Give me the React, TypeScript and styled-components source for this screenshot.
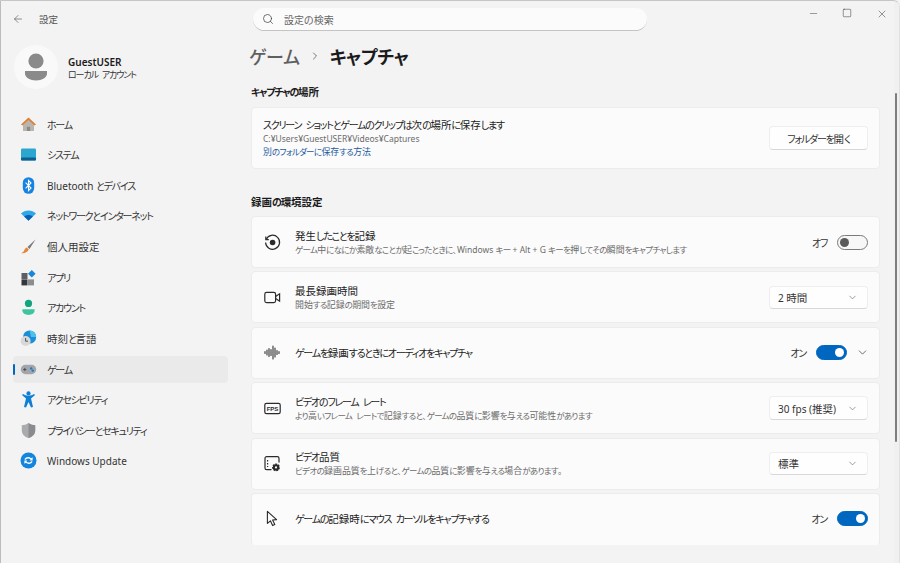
import { FC, ReactNode } from 'react'
import { createGlobalStyle, styled } from 'styled-components'
import { ArrowLeft, ChevronDown, ChevronRight, Minus, Search, Square, X } from 'lucide-react'

const GlobalStyle = createGlobalStyle`
  html, body {
    margin: 0;
    padding: 0;
    background: #f3f3f3;
  }
  body {
    font-family: "Noto Sans", "Noto Sans CJK JP", sans-serif;
    font-feature-settings: "palt";
    color: #1b1b1b;
    overflow: hidden;
  }
`

const Window = styled.div`
  box-sizing: border-box;
  position: relative;
  display: grid;
  grid-template-columns: 239px 1fr;
  width: 900px;
  height: 563px;
  overflow: hidden;
  background: #f3f3f3;
  border-top: 1px solid #c6c6c6;
  border-left: 1px solid #bcbcbc;
  border-right: 1px solid #e2e2e2;
  border-top-right-radius: 7px;
`

const Sidebar = styled.aside`
  display: flex;
  flex-direction: column;
`

const TitleBar = styled.div`
  display: flex;
  align-items: center;
  gap: 15px;
  height: 36px;
  padding-left: 11px;
  color: #555;
  font-size: 9.5px;
`

const Profile = styled.div`
  display: flex;
  align-items: center;
  gap: 10px;
  height: 44px;
  margin: 8px 0 21.5px 13px;
`

const Avatar = styled.div`
  display: flex;
  align-items: center;
  justify-content: center;
  width: 44px;
  height: 44px;
  border-radius: 50%;
  background: #f9f9f9;
`

const ProfileText = styled.div`
  display: flex;
  flex-direction: column;
  padding-top: 3px;
`

const UserName = styled.div`
  font-size: 10px;
  line-height: 13px;
  font-weight: 600;
`

const UserKind = styled.div`
  font-size: 9px;
  line-height: 12px;
  color: #333;
`

const Nav = styled.nav`
  display: flex;
  flex-direction: column;
  gap: 3.64px;
  margin-left: 12px;
  width: 215px;
`

const NavItem = styled.div<{ $active?: boolean }>`
  position: relative;
  display: flex;
  align-items: center;
  gap: 10px;
  height: 27px;
  padding-left: 7px;
  border-radius: 4px;
  font-size: 10px;
  color: #333;
  background: ${p => (p.$active ? '#eaeaea' : 'transparent')};

  &::before {
    content: '';
    display: ${p => (p.$active ? 'block' : 'none')};
    position: absolute;
    left: 0;
    top: 8px;
    width: 2px;
    height: 11px;
    border-radius: 1px;
    background: #0067c0;
  }
`

const NavIcon = styled.svg`
  flex: none;
  width: 17px;
  height: 17px;
`

const Main = styled.main`
  display: flex;
  flex-direction: column;
  height: 544px;
  overflow: hidden;
  padding: 0 19px 0 11px;
`

const TopBar = styled.div`
  display: flex;
  align-items: flex-start;
  justify-content: space-between;
  height: 36px;
  flex: none;
`

const SearchBox = styled.div`
  box-sizing: border-box;
  display: flex;
  align-items: center;
  gap: 10px;
  width: 394px;
  height: 23px;
  margin: 7px 0 0 2px;
  padding-left: 9px;
  border-radius: 12px;
  background: #fbfbfb;
  border-bottom: 1.5px solid #c4c4c4;
  font-size: 10px;
  color: #666;
`

const WindowControls = styled.div`
  display: flex;
  gap: 23.5px;
  margin: 7px -7.5px 0 0;
  color: #333;
`

const Title = styled.h1`
  display: flex;
  align-items: center;
  gap: 9px;
  height: 38px;
  margin: 0 0 0 -2px;
  flex: none;
  font-size: 18px;
  font-weight: 600;
  letter-spacing: -0.3px;
  color: #1b1b1b;
`

const TitleParent = styled.span`
  color: #5f5f5f;
  font-weight: 500;
`

const SectionHeading = styled.h2<{ $top: number; $bottom: number }>`
  flex: none;
  height: 16px;
  margin: ${p => p.$top}px 0 ${p => p.$bottom}px;
  font-size: 10px;
  line-height: 16px;
  font-weight: 600;
`

const Card = styled.section`
  box-sizing: border-box;
  flex: none;
  display: flex;
  align-items: center;
  justify-content: space-between;
  height: 62px;
  padding: 0 11px;
  background: #fbfbfb;
  border: 1px solid #ececec;
  border-radius: 4px;
`

const Rows = styled.div`
  display: flex;
  flex-direction: column;
  flex: none;
  gap: 3.4px;
`

const Row = styled.div`
  box-sizing: border-box;
  display: flex;
  align-items: center;
  gap: 14px;
  height: 52px;
  padding: 0 11px 0 12px;
  background: #fbfbfb;
  border: 1px solid #ececec;
  border-radius: 4px;

  &:last-child {
    border-bottom-color: transparent;
  }
`

const RowIcon = styled.svg`
  flex: none;
  width: 17px;
  height: 17px;
  color: #2b2b2b;
`

const RowText = styled.div`
  flex: 1;
  min-width: 0;
  padding-top: 1px;
`

const RowTitle = styled.div`
  font-size: 10px;
  line-height: 13px;
  color: #222;
`

const RowSub = styled.div<{ $link?: boolean }>`
  --kana: -0.08em;
  font-size: 8.5px;
  line-height: 13px;
  white-space: nowrap;
  color: ${p => (p.$link ? '#1d5a9e' : '#6b6b6b')};
`

const Control = styled.div`
  display: flex;
  align-items: center;
  flex: none;
  gap: 10px;
  font-size: 10px;
  color: #333;
`

const Toggle = styled.div<{ $on?: boolean }>`
  box-sizing: border-box;
  display: flex;
  align-items: center;
  justify-content: ${p => (p.$on ? 'flex-end' : 'flex-start')};
  width: 31px;
  height: 15px;
  padding: 0 2px;
  border-radius: 8px;
  border: 1px solid ${p => (p.$on ? '#0067c0' : '#7a7a7a')};
  background: ${p => (p.$on ? '#0067c0' : '#f7f7f7')};

  &::after {
    content: '';
    width: 9px;
    height: 9px;
    border-radius: 50%;
    background: ${p => (p.$on ? '#fff' : '#5a5a5a')};
  }
`

const Dropdown = styled.div`
  box-sizing: border-box;
  display: flex;
  align-items: center;
  justify-content: space-between;
  width: 99px;
  height: 23.5px;
  padding: 0 9px 0 8px;
  border-radius: 4px;
  background: #fefefe;
  border: 1px solid #eeeeee;
  border-bottom-color: #d8d8d8;
  font-size: 10px;
  color: #333;
`

const Button = styled(Dropdown)`
  justify-content: center;
  padding: 0;
`

const Expand = styled(ChevronDown)`
  margin: 0 -1px 0 -1px;
  color: #333;
`

const ScrollThumb = styled.div`
  position: absolute;
  right: 2px;
  top: 92px;
  width: 2px;
  height: 349px;
  border-radius: 1px;
  background: #7e7e7e;
`

const ScrollTrack = styled.div`
  position: absolute;
  right: 0;
  top: 0;
  bottom: 0;
  width: 5px;
  background: #f0f0f0;
`

// the original UI font sets kana narrower and kanji a little wider than Noto does
const Kana = styled.span`
  letter-spacing: var(--kana, -0.125em);
  word-spacing: 0.3em;
`

const Kanji = styled.span`
  font-size: 1.05em;
`

const Ja: FC<{ text: string }> = ({ text }) => (
  <span>
    {text.split(/([\u3040-\u30ff]+(?: [\u3040-\u30ff]+)*|[\u4e00-\u9fff]+)/).map((run, i) => {
      if (/^[\u3040-\u30ff]/.test(run)) return <Kana key={i}>{run}</Kana>
      if (/^[\u4e00-\u9fff]/.test(run)) return <Kanji key={i}>{run}</Kanji>
      return run
    })}
  </span>
)

const navItems: { label: string; icon: ReactNode; active?: boolean }[] = [
  {
    label: 'ホーム',
    icon: (
      <>
        <path d="M3 8 L3 15 L6.5 15 L6.5 10.5 L10.5 10.5 L10.5 15 L14 15 L14 8 L8.5 3.5 Z" fill="#b9b6b0" />
        <path d="M6.5 15 L6.5 10.5 L10.5 10.5 L10.5 15 Z" fill="#8d8a85" />
        <path d="M1 8.5 L8.5 1.5 L16 8.5 L14.6 9.6 L8.5 4 L2.4 9.6 Z" fill="#e07f32" />
      </>
    ),
  },
  {
    label: 'システム',
    icon: (
      <>
        <rect x="1" y="2.5" width="15" height="12" rx="1.2" fill="#2aa6cf" />
        <rect x="1" y="11.5" width="15" height="3" rx="1" fill="#0d5f8f" />
      </>
    ),
  },
  {
    label: 'Bluetooth とデバイス',
    icon: (
      <>
        <rect x="2.8" y="0.2" width="11.4" height="16.6" rx="5.7" fill="#1583e0" />
        <path d="M5.6 5.6 L11 11 L8.5 13.6 L8.5 3.4 L11 6 L5.6 11.4" fill="none" stroke="#fff" strokeWidth="1.1" />
      </>
    ),
  },
  {
    label: 'ネットワークとインターネット',
    icon: (
      <>
        <path d="M1 6.5 C5 2.6 12 2.6 16 6.5 L8.5 13.8 Z" fill="#2fa8e8" />
        <path d="M4.2 9.6 C6.6 7.6 10.4 7.6 12.8 9.6 L8.5 13.8 Z" fill="#0a5fb4" />
      </>
    ),
  },
  {
    label: '個人用設定',
    icon: (
      <>
        <path d="M15.5 1.5 L7.5 9 L9.5 11 Z" fill="#77797c" />
        <path d="M6.8 9.4 C4.6 10 4.6 12 3.6 13.4 C3 14.2 2 14.8 1.2 15.2 C4 15.6 7.4 14.8 8.8 11.6 Z" fill="#e98434" />
      </>
    ),
  },
  {
    label: 'アプリ',
    icon: (
      <>
        <rect x="1.5" y="4" width="6" height="6" fill="#5c6065" />
        <rect x="1.5" y="10.4" width="6" height="6" fill="#33363a" />
        <rect x="8" y="10.4" width="6" height="6" fill="#8a8d91" />
        <path d="M11.8 1 L15.6 4.8 L11.8 8.6 L8 4.8 Z" fill="#1a86d8" />
      </>
    ),
  },
  {
    label: 'アカウント',
    icon: (
      <>
        <circle cx="8.5" cy="4.4" r="3.6" fill="#12a37f" />
        <path d="M2.4 10.2 H14.6 V11.6 C14.6 14.4 11.8 16 8.5 16 C5.2 16 2.4 14.4 2.4 11.6 Z" fill="#3ec5a0" />
      </>
    ),
  },
  {
    label: '時刻と言語',
    icon: (
      <>
        <circle cx="9.6" cy="7" r="6.6" fill="#1a8fd8" />
        <path d="M9.6 0.4 A6.6 6.6 0 0 1 16.2 7 L11 7 Z" fill="#4fc0ea" />
        <circle cx="5.6" cy="11" r="5" fill="#d8d8d8" />
        <path d="M5.6 8 V11.2 H8" fill="none" stroke="#444" strokeWidth="0.9" />
      </>
    ),
  },
  {
    label: 'ゲーム',
    active: true,
    icon: (
      <>
        <rect x="0.8" y="3.8" width="15.4" height="9.4" rx="4.6" fill="#a2a6ab" />
        <path d="M3.2 8.5 H6.4 M4.8 6.9 V10.1" stroke="#4e5257" strokeWidth="1" />
        <circle cx="11.2" cy="7.4" r="1.2" fill="#1a78c8" />
        <circle cx="12.8" cy="9.6" r="1.2" fill="#1a78c8" />
      </>
    ),
  },
  {
    label: 'アクセシビリティ',
    icon: (
      <>
        <circle cx="8.5" cy="2.4" r="2.1" fill="#0f7fd6" />
        <path d="M2 4 L3 3 C6 5.2 11 5.2 14 3 L15 4 L11 7.6 L13 16 L11 16.6 L8.5 11 L6 16.6 L4 16 L6 7.6 Z" fill="#0f7fd6" />
      </>
    ),
  },
  {
    label: 'プライバシーとセキュリティ',
    icon: (
      <>
        <path d="M8.5 1 C10.5 2.6 13 3.2 15.2 3.2 V8.4 C15.2 12 12.4 14.8 8.5 16 C4.6 14.8 1.8 12 1.8 8.4 V3.2 C4 3.2 6.5 2.6 8.5 1 Z" fill="#a9abad" />
        <path d="M8.5 1 C10.5 2.6 13 3.2 15.2 3.2 V8.4 C15.2 12 12.4 14.8 8.5 16 Z" fill="#898b8e" />
      </>
    ),
  },
  {
    label: 'Windows Update',
    icon: (
      <>
        <circle cx="8.5" cy="8.5" r="8" fill="#1385dc" />
        <path d="M4.4 7.6 C5 5.4 8.6 4 11.2 6.2 L12.6 5.2 V8.4 H9.6 L10.6 7.2 C9 5.9 6.6 6.4 5.8 7.8 Z" fill="#fff" />
        <path d="M12.6 9.4 C12 11.6 8.4 13 5.8 10.8 L4.4 11.8 V8.6 H7.4 L6.4 9.8 C8 11.1 10.4 10.6 11.2 9.2 Z" fill="#fff" />
      </>
    ),
  },
]

const RecordIcon: FC = () => (
  <RowIcon viewBox="0 0 17 17" fill="none" stroke="currentColor" strokeWidth="1.2">
    <path d="M2.2 5.4 A7 7 0 1 1 1.6 8.5" />
    <path d="M1.8 2.6 V5.6 H4.8" />
    <circle cx="8.6" cy="8.5" r="2.8" fill="currentColor" stroke="none" />
  </RowIcon>
)

const VideoIcon: FC = () => (
  <RowIcon viewBox="0 0 17 17" fill="none" stroke="currentColor" strokeWidth="1.2">
    <rect x="0.8" y="3.4" width="10.8" height="10.2" rx="1.8" />
    <path d="M11.6 7.4 L15.6 4.8 V12.2 L11.6 9.6" />
  </RowIcon>
)

const WaveIcon: FC = () => (
  <RowIcon viewBox="0 0 17 17" fill="none" stroke="#444" strokeWidth="1.2" strokeLinecap="round">
    <path d="M1 7.5 V9.5 M3 6 V11 M5 4.5 V12.5 M7 5.5 V11.5 M9 2 V15 M11 4 V13 M13 6.5 V10.5 M15 7.5 V9.5" />
  </RowIcon>
)

const FpsText = styled.text`
  font-family: "Liberation Sans", sans-serif;
  font-size: 6px;
  font-weight: 700;
  fill: currentColor;
`

const FpsIcon: FC = () => (
  <RowIcon viewBox="0 0 17 17" fill="none">
    <rect x="0.8" y="3.4" width="15.4" height="10.2" rx="1.6" stroke="currentColor" strokeWidth="1.2" />
    <FpsText x="8.5" y="10.6" textAnchor="middle">FPS</FpsText>
  </RowIcon>
)

const QualityIcon: FC = () => (
  <RowIcon viewBox="0 0 17 17" fill="none" stroke="currentColor" strokeWidth="1.2">
    <path d="M7.5 14.6 H2.6 A1.6 1.6 0 0 1 1 13 V3.2 A1.6 1.6 0 0 1 2.6 1.6 H13.4 A1.6 1.6 0 0 1 15 3.2 V7.5" />
    <path d="M3.6 5 V6.4 M3.6 8 V9.4 M3.6 11 V12" />
    <circle cx="12" cy="12.4" r="3.2" fill="currentColor" stroke="currentColor" strokeWidth="1.4" strokeDasharray="1.8 1" />
    <circle cx="12" cy="12.4" r="1.1" fill="#fbfbfb" stroke="none" />
  </RowIcon>
)

const CursorIcon: FC = () => (
  <RowIcon viewBox="0 0 17 17" fill="none" stroke="currentColor" strokeWidth="1.1" strokeLinejoin="round">
    <path d="M3.4 1.4 V13.4 L6.4 10.8 L8.6 15.6 L10.8 14.6 L8.6 10 L12.6 9.6 Z" />
  </RowIcon>
)

const Chevron: FC = () => <ChevronDown size={11} strokeWidth={1.4} color="#666" />

export default function App() {
  return (
    <Window>
      <GlobalStyle />
      <Sidebar>
        <TitleBar>
          <ArrowLeft size={12} strokeWidth={1.3} />
          設定
        </TitleBar>
        <Profile>
          <Avatar>
            <svg width="24" height="28" viewBox="0 0 24 28">
              <circle cx="12" cy="8" r="7.6" fill="#8a8a8a" />
              <path d="M1 18 H23 V20.5 C23 24.5 18 27.5 12 27.5 C6 27.5 1 24.5 1 20.5 Z" fill="#8a8a8a" />
            </svg>
          </Avatar>
          <ProfileText>
            <UserName>GuestUSER</UserName>
            <UserKind><Ja text="ローカル アカウント" /></UserKind>
          </ProfileText>
        </Profile>
        <Nav>
          {navItems.map(item => (
            <NavItem key={item.label} $active={item.active}>
              <NavIcon viewBox="0 0 17 17">{item.icon}</NavIcon>
              <Ja text={item.label} />
            </NavItem>
          ))}
        </Nav>
      </Sidebar>
      <Main>
        <TopBar>
          <SearchBox>
            <Search size={12} strokeWidth={1.5} color="#444" />
            設定の検索
          </SearchBox>
          <WindowControls>
            <Minus size={11} strokeWidth={1} />
            <Square size={10} strokeWidth={1.2} />
            <X size={12} strokeWidth={1} />
          </WindowControls>
        </TopBar>
        <Title>
          <TitleParent>ゲーム</TitleParent>
          <ChevronRight size={12} strokeWidth={1.6} color="#555" />
          キャプチャ
        </Title>
        <SectionHeading $top={9} $bottom={7}><Ja text="キャプチャの場所" /></SectionHeading>
        <Card>
          <RowText>
            <RowTitle><Ja text="スクリーン ショットとゲームのクリップは次の場所に保存します" /></RowTitle>
            <RowSub>C:¥Users¥GuestUSER¥Videos¥Captures</RowSub>
            <RowSub $link><Ja text="別のフォルダーに保存する方法" /></RowSub>
          </RowText>
          <Button><Ja text="フォルダーを開く" /></Button>
        </Card>
        <SectionHeading $top={25} $bottom={6}><Ja text="録画の環境設定" /></SectionHeading>
        <Rows>
          <Row>
            <RecordIcon />
            <RowText>
              <RowTitle><Ja text="発生したことを記録" /></RowTitle>
              <RowSub><Ja text="ゲーム中になにか素敵なことが起こったときに、Windows キー + Alt + G キーを押してその瞬間をキャプチャします" /></RowSub>
            </RowText>
            <Control>
              <Ja text="オフ" />
              <Toggle />
            </Control>
          </Row>
          <Row>
            <VideoIcon />
            <RowText>
              <RowTitle><Ja text="最長録画時間" /></RowTitle>
              <RowSub><Ja text="開始する記録の期間を設定" /></RowSub>
            </RowText>
            <Dropdown>
              <Ja text="2 時間" />
              <Chevron />
            </Dropdown>
          </Row>
          <Row>
            <WaveIcon />
            <RowText>
              <RowTitle><Ja text="ゲームを録画するときにオーディオをキャプチャ" /></RowTitle>
            </RowText>
            <Control>
              <Ja text="オン" />
              <Toggle $on />
              <Expand size={13} strokeWidth={1.3} />
            </Control>
          </Row>
          <Row>
            <FpsIcon />
            <RowText>
              <RowTitle><Ja text="ビデオのフレーム レート" /></RowTitle>
              <RowSub><Ja text="より高いフレーム レートで記録すると、ゲームの品質に影響を与える可能性があります" /></RowSub>
            </RowText>
            <Dropdown>
              <Ja text="30 fps (推奨)" />
              <Chevron />
            </Dropdown>
          </Row>
          <Row>
            <QualityIcon />
            <RowText>
              <RowTitle><Ja text="ビデオ品質" /></RowTitle>
              <RowSub><Ja text="ビデオの録画品質を上げると、ゲームの品質に影響を与える場合があります。" /></RowSub>
            </RowText>
            <Dropdown>
              <Ja text="標準" />
              <Chevron />
            </Dropdown>
          </Row>
          <Row>
            <CursorIcon />
            <RowText>
              <RowTitle><Ja text="ゲームの記録時にマウス カーソルをキャプチャする" /></RowTitle>
            </RowText>
            <Control>
              <Ja text="オン" />
              <Toggle $on />
            </Control>
          </Row>
        </Rows>
      </Main>
      <ScrollTrack />
      <ScrollThumb />
    </Window>
  )
}
